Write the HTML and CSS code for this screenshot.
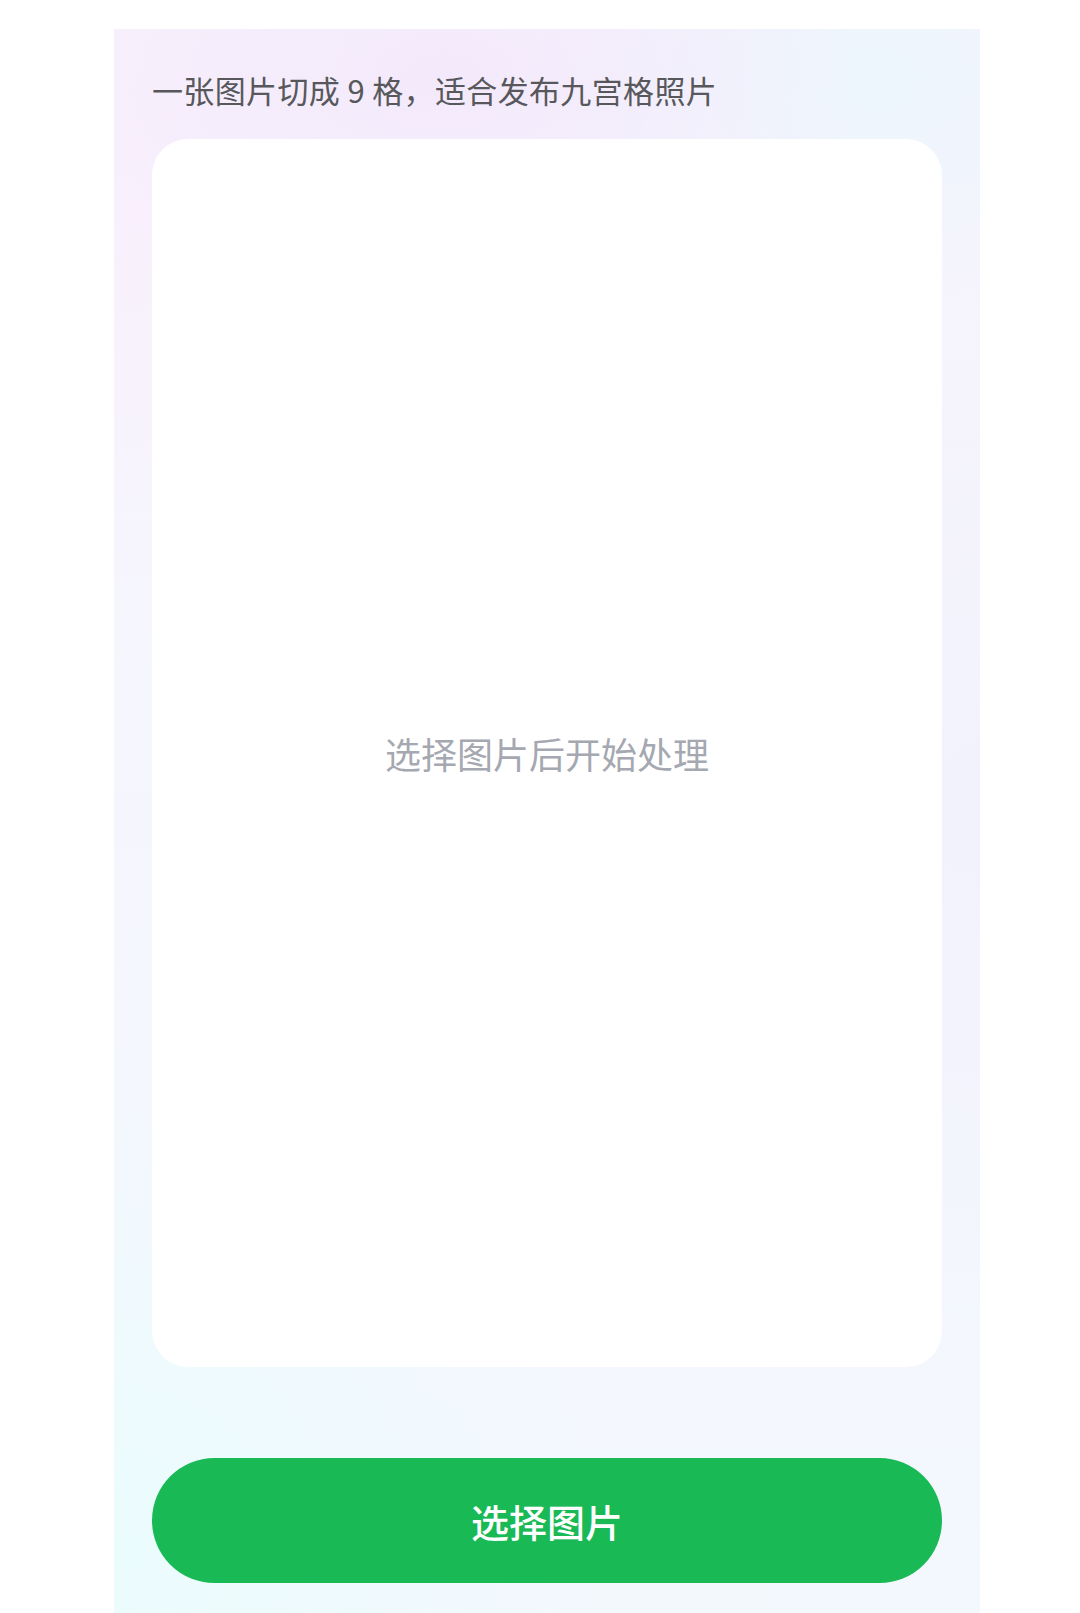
FILE: index.html
```html
<!DOCTYPE html>
<html lang="zh-CN">
<head>
<meta charset="utf-8">
<title>九宫格切图</title>
<link rel="stylesheet" href="styles.css">
</head>
<body>
<div class="page">
  <div class="topbar"></div>
  <main class="panel">
    <p class="desc">一张图片切成 9 格，适合发布九宫格照片</p>
    <section class="preview">
      <span class="placeholder">选择图片后开始处理</span>
    </section>
    <button class="pick">选择图片</button>
  </main>
</div>
</body>
</html>
```

FILE: styles.css
```css
* { box-sizing: border-box; }
html, body { margin: 0; padding: 0; background: #ffffff; }
body {
  font-family: "Noto Sans CJK SC", "Noto Sans", sans-serif;
  width: 1080px;
  height: 1613px;
  overflow: hidden;
}
.page {
  display: flex;
  flex-direction: column;
  height: 1613px;
}
.topbar {
  height: 29px;
  flex: none;
  background: #ffffff;
}
.panel {
  margin: 0 100px 0 114px;
  flex: 1;
  padding: 40px 38px 0 38px;
  display: flex;
  flex-direction: column;
  background:
    radial-gradient(ellipse 420px 260px at 38% 3%, rgba(242, 230, 251, 0.8), rgba(242, 230, 251, 0) 100%),
    radial-gradient(ellipse 340px 240px at 88% 3%, rgba(234, 246, 253, 0.85), rgba(234, 246, 253, 0) 100%),
    radial-gradient(ellipse 260px 420px at 0% 8%, rgba(249, 239, 252, 0.8), rgba(249, 239, 252, 0) 100%),
    radial-gradient(ellipse 480px 480px at 0% 96%, rgba(235, 252, 253, 1), rgba(235, 252, 253, 0) 100%),
    radial-gradient(ellipse 380px 560px at 100% 50%, rgba(241, 241, 253, 0.9), rgba(241, 241, 253, 0) 100%),
    linear-gradient(180deg, #f7f3fc 0%, #f5f6fd 50%, #f3f8fd 100%);
}
.desc {
  margin: 0;
  font-size: 31px;
  line-height: 42px;
  color: #58585c;
  letter-spacing: 0.35px;
}
.preview {
  margin-top: 28px;
  height: 1228px;
  background: #ffffff;
  border-radius: 36px;
  display: flex;
  align-items: center;
  justify-content: center;
}
.placeholder {
  font-size: 36px;
  color: #a5a8b0;
  line-height: 1;
}
.pick {
  margin-top: 91px;
  height: 125px;
  width: 100%;
  border: none;
  border-radius: 63px;
  background: #19b955;
  color: #ffffff;
  font-family: "Noto Sans CJK SC", "Noto Sans", sans-serif;
  font-size: 38px;
  font-weight: 500;
  letter-spacing: 0;
  cursor: pointer;
}
```
